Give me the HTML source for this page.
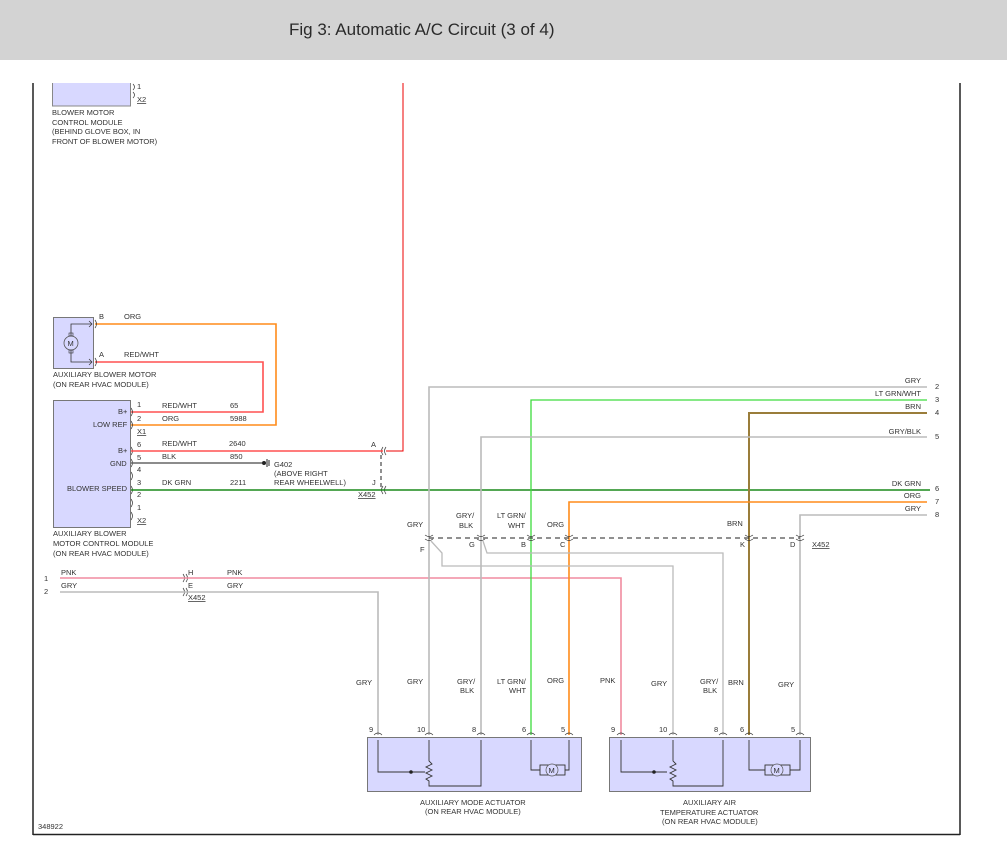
<!DOCTYPE html>
<html><head><meta charset="utf-8"><style>
html,body{margin:0;padding:0;background:#fff;}
body{width:1007px;height:858px;overflow:hidden;position:relative;font-family:"Liberation Sans",sans-serif;}
.hdr{position:absolute;left:0;top:0;width:1007px;height:60px;background:#d3d3d3;}
.hdr span{position:absolute;left:289px;top:20px;font-size:17px;color:#2a2a2a;}
svg{position:absolute;left:0;top:0;}
text{font-family:"Liberation Sans",sans-serif;font-size:7.5px;fill:#333;}
</style></head><body>
<div class="hdr"><span>Fig 3: Automatic A/C Circuit (3 of 4)</span></div>
<svg width="1007" height="858" viewBox="0 0 1007 858">
<line x1="33" y1="83" x2="33" y2="835" stroke="#222" stroke-width="1.5"/>
<line x1="960" y1="83" x2="960" y2="835" stroke="#222" stroke-width="1.5"/>
<line x1="33" y1="834.5" x2="960" y2="834.5" stroke="#222" stroke-width="1.5"/>
<line x1="52.5" y1="83" x2="52.5" y2="106" stroke="#888"/>
<line x1="130.5" y1="83" x2="130.5" y2="106" stroke="#888"/>
<rect x="53" y="83" width="77" height="23" fill="#d8d8ff"/>
<line x1="52" y1="106" x2="131" y2="106" stroke="#888"/>
<text x="137" y="89">1</text><text x="137" y="102" text-decoration="underline">X2</text>
<g fill="none" stroke="#333" stroke-width=".7">
<path d="M133,84 q3,3 0,6 M133,92 q3,3 0,6"/>
</g>
<text x="52" y="115">BLOWER MOTOR</text><text x="52" y="125">CONTROL MODULE</text>
<text x="52" y="134">(BEHIND GLOVE BOX, IN</text><text x="52" y="144">FRONT OF BLOWER MOTOR)</text>
<polyline points="403,83 403,451 386,451" fill="none" stroke="#e00" stroke-width="1"/>
<rect x="53.5" y="317.5" width="40" height="51" fill="#d8d8ff" stroke="#777"/>
<circle cx="71" cy="343" r="7" fill="#d8d8ff" stroke="#555" stroke-width=".8"/>
<text x="67.5" y="346" font-size="8">M</text>
<polyline points="71,336 71,324 92,324" fill="none" stroke="#333" stroke-width=".8"/>
<polyline points="71,350 71,362 92,362" fill="none" stroke="#333" stroke-width=".8"/>
<rect x="69" y="333" width="4" height="3" fill="none" stroke="#333" stroke-width=".6"/>
<rect x="69" y="350" width="4" height="3" fill="none" stroke="#333" stroke-width=".6"/>
<polyline points="95,324 276,324 276,425 131,425" fill="none" stroke="#ff8c1a" stroke-width="1.6"/>
<polyline points="95,362 263,362 263,412 131,412" fill="none" stroke="#ff5050" stroke-width="1.6"/>
<g fill="none" stroke="#333" stroke-width=".7">
<path d="M89,321 l3,3 l-3,3 M95,320 q3,4 0,8 M89,359 l3,3 l-3,3 M95,358 q3,4 0,8"/>
<path d="M131,408 q3,4 0,8 M131,421 q3,4 0,8 M131,447 q3,4 0,8 M131,459 q3,4 0,8 M131,472 q3,4 0,8 M131,486 q3,4 0,8 M131,499 q3,4 0,8 M131,512 q3,4 0,8"/>
<path d="M386,447 q-3,4 0,8 M383,447 q-3,4 0,8 M386,486 q-3,4 0,8 M383,486 q-3,4 0,8"/>
<path d="M183,574 q3,4 0,8 M186,574 q3,4 0,8 M183,588 q3,4 0,8 M186,588 q3,4 0,8"/>
</g>
<text x="99" y="319">B</text><text x="124" y="319">ORG</text>
<text x="99" y="357">A</text><text x="124" y="357">RED/WHT</text>
<text x="53" y="377">AUXILIARY BLOWER MOTOR</text><text x="53" y="387">(ON REAR HVAC MODULE)</text>
<rect x="53.5" y="400.5" width="77" height="127" fill="#d8d8ff" stroke="#777"/>
<text x="118" y="414">B+</text><text x="93" y="427">LOW REF</text>
<text x="118" y="453">B+</text><text x="110" y="466">GND</text>
<text x="67" y="491">BLOWER SPEED</text>
<text x="137" y="407">1</text><text x="137" y="421">2</text><text x="137" y="434" text-decoration="underline">X1</text>
<text x="137" y="447">6</text><text x="137" y="460">5</text><text x="137" y="472">4</text><text x="137" y="485">3</text><text x="137" y="497">2</text><text x="137" y="510">1</text><text x="137" y="523" text-decoration="underline">X2</text>
<text x="162" y="408">RED/WHT</text><text x="230" y="408">65</text>
<text x="162" y="421">ORG</text><text x="230" y="421">5988</text>
<text x="162" y="446">RED/WHT</text><text x="229" y="446">2640</text>
<text x="162" y="459">BLK</text><text x="230" y="459">850</text>
<text x="162" y="485">DK GRN</text><text x="230" y="485">2211</text>
<line x1="131" y1="451" x2="383" y2="451" stroke="#ff5050" stroke-width="1.6"/>
<line x1="131" y1="463" x2="262" y2="463" stroke="#666" stroke-width="1.6"/>
<circle cx="264" cy="463" r="2" fill="#222"/><line x1="267" y1="459" x2="267" y2="467" stroke="#222"/><line x1="269" y1="460" x2="269" y2="466" stroke="#222"/>
<text x="274" y="467">G402</text><text x="274" y="476">(ABOVE RIGHT</text><text x="274" y="485">REAR WHEELWELL)</text>
<line x1="131" y1="490" x2="930" y2="490" stroke="#1a8a1a" stroke-width="1.6"/>
<line x1="381" y1="455" x2="381" y2="487" stroke="#222" stroke-dasharray="4,3"/>
<text x="371" y="447">A</text><text x="372" y="485">J</text><text x="358" y="497" text-decoration="underline">X452</text>
<text x="53" y="536">AUXILIARY BLOWER</text><text x="53" y="546">MOTOR CONTROL MODULE</text><text x="53" y="556">(ON REAR HVAC MODULE)</text>
<polyline points="60,578 621,578 621,735" fill="none" stroke="#f08ca0" stroke-width="1.6"/>
<polyline points="60,592 378,592 378,735" fill="none" stroke="#bbb" stroke-width="1.6"/>
<text x="44" y="581">1</text><text x="44" y="594">2</text>
<text x="61" y="575">PNK</text><text x="61" y="588">GRY</text>
<text x="188" y="575">H</text><text x="188" y="588">E</text><text x="188" y="600" text-decoration="underline">X452</text>
<text x="227" y="575">PNK</text><text x="227" y="588">GRY</text>
<polyline points="927,387 429,387 429,735" fill="none" stroke="#bbb" stroke-width="1.6"/>
<polyline points="927,400 531,400 531,735" fill="none" stroke="#3ddc3d" stroke-width="1.3"/>
<polyline points="927,413 749,413 749,735" fill="none" stroke="#9a7d3a" stroke-width="2"/>
<polyline points="927,437 481,437 481,735" fill="none" stroke="#bbb" stroke-width="1.6"/>
<polyline points="927,502 569,502 569,735" fill="none" stroke="#ff8c1a" stroke-width="1.6"/>
<polyline points="927,515 800,515 800,735" fill="none" stroke="#bbb" stroke-width="1.6"/>
<polyline points="431,541 442,553 442,566 673,566 673,735" fill="none" stroke="#bbb" stroke-width="1.3"/>
<polyline points="483,541 487,553 723,553 723,735" fill="none" stroke="#bbb" stroke-width="1.3"/>
<line x1="429" y1="538" x2="800" y2="538" stroke="#222" stroke-dasharray="5,4"/>
<g fill="none" stroke="#333" stroke-width=".7">
<path d="M425,535 q4,3 8,0 M425,539 q4,3 8,0 M477,535 q4,3 8,0 M477,539 q4,3 8,0 M527,535 q4,3 8,0 M527,539 q4,3 8,0 M565,535 q4,3 8,0 M565,539 q4,3 8,0 M745,535 q4,3 8,0 M745,539 q4,3 8,0 M796,535 q4,3 8,0 M796,539 q4,3 8,0"/>
<path d="M374,735 q4,-4 8,0 M425,735 q4,-4 8,0 M477,735 q4,-4 8,0 M527,735 q4,-4 8,0 M565,735 q4,-4 8,0 M617,735 q4,-4 8,0 M669,735 q4,-4 8,0 M719,735 q4,-4 8,0 M745,735 q4,-4 8,0 M796,735 q4,-4 8,0"/>
<path d="M375,743 l3,-3 l3,3 M426,743 l3,-3 l3,3 M478,743 l3,-3 l3,3 M528,743 l3,-3 l3,3 M566,743 l3,-3 l3,3 M618,743 l3,-3 l3,3 M670,743 l3,-3 l3,3 M720,743 l3,-3 l3,3 M746,743 l3,-3 l3,3 M797,743 l3,-3 l3,3"/>
</g>
<g text-anchor="end">
<text x="921" y="383">GRY</text><text x="921" y="396">LT GRN/WHT</text><text x="921" y="409">BRN</text><text x="921" y="434">GRY/BLK</text>
<text x="921" y="486">DK GRN</text><text x="921" y="498">ORG</text><text x="921" y="511">GRY</text>
</g>
<text x="935" y="389">2</text><text x="935" y="402">3</text><text x="935" y="415">4</text><text x="935" y="439">5</text><text x="935" y="491">6</text><text x="935" y="504">7</text><text x="935" y="517">8</text>
<text x="407" y="527">GRY</text><text x="456" y="518">GRY/</text><text x="459" y="528">BLK</text>
<text x="497" y="518">LT GRN/</text><text x="508" y="528">WHT</text><text x="547" y="527">ORG</text><text x="727" y="526">BRN</text>
<text x="420" y="552">F</text><text x="469" y="547">G</text><text x="521" y="547">B</text><text x="560" y="547">C</text><text x="740" y="547">K</text><text x="790" y="547">D</text>
<text x="812" y="547" text-decoration="underline">X452</text>
<text x="356" y="685">GRY</text><text x="407" y="684">GRY</text><text x="457" y="684">GRY/</text><text x="460" y="693">BLK</text>
<text x="497" y="684">LT GRN/</text><text x="509" y="693">WHT</text><text x="547" y="683">ORG</text>
<text x="600" y="683">PNK</text><text x="651" y="686">GRY</text><text x="700" y="684">GRY/</text><text x="703" y="693">BLK</text><text x="728" y="685">BRN</text><text x="778" y="687">GRY</text>
<rect x="367.5" y="737.5" width="214" height="54" fill="#d8d8ff" stroke="#777"/>
<text x="369" y="732">9</text><text x="417" y="732">10</text><text x="472" y="732">8</text><text x="522" y="732">6</text><text x="561" y="732">5</text>
<g fill="none" stroke="#333" stroke-width=".9">
<polyline points="378,740 378,772 425,772"/>
<polyline points="429,740 429,761 432,764 426,767 432,770 426,773 432,776 426,779 429,781 429,786 481,786 481,740"/>
<polyline points="531,740 531,770 540,770"/><polyline points="565,770 569,770 569,740"/>
<rect x="540" y="765" width="25" height="10"/>
</g>
<circle cx="411" cy="772" r="1.8" fill="#222"/>
<circle cx="552" cy="770" r="6" fill="#d8d8ff" stroke="#555" stroke-width=".7"/><text x="548.5" y="773" font-size="8">M</text>
<text x="420" y="805">AUXILIARY MODE ACTUATOR</text><text x="425" y="814">(ON REAR HVAC MODULE)</text>
<rect x="609.5" y="737.5" width="201" height="54" fill="#d8d8ff" stroke="#777"/>
<text x="611" y="732">9</text><text x="659" y="732">10</text><text x="714" y="732">8</text><text x="740" y="732">6</text><text x="791" y="732">5</text>
<g fill="none" stroke="#333" stroke-width=".9">
<polyline points="621,740 621,772 667,772"/>
<polyline points="673,740 673,761 676,764 670,767 676,770 670,773 676,776 670,779 673,781 673,786 723,786 723,740"/>
<polyline points="749,740 749,770 765,770"/><polyline points="790,770 800,770 800,740"/>
<rect x="765" y="765" width="25" height="10"/>
</g>
<circle cx="654" cy="772" r="1.8" fill="#222"/>
<circle cx="777" cy="770" r="6" fill="#d8d8ff" stroke="#555" stroke-width=".7"/><text x="773.5" y="773" font-size="8">M</text>
<text x="683" y="805">AUXILIARY AIR</text><text x="660" y="815">TEMPERATURE ACTUATOR</text><text x="662" y="824">(ON REAR HVAC MODULE)</text>
<text x="38" y="829">348922</text>
</svg>
</body></html>
